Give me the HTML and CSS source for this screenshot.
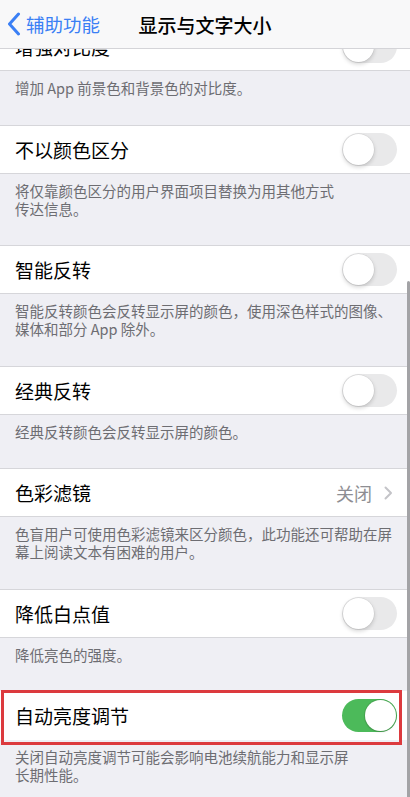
FILE: index.html
```html
<!DOCTYPE html>
<html lang="zh-CN">
<head>
  <meta charset="UTF-8" />
  <meta name="viewport" content="width=device-width, initial-scale=1.0"/>
  <title>显示与文字大小</title>
  <link rel="stylesheet" href="styles.css">
</head>
<body>

  <header class="navbar">
    <a class="back" href="#">
      <svg width="14" height="24" viewBox="0 0 14 24">
        <path d="M11.5 2 L2.5 12 L11.5 22" fill="none" stroke="currentColor" stroke-width="3" stroke-linecap="round" stroke-linejoin="round"/>
      </svg>
      <span>辅助功能</span>
    </a>
    <h1 class="title">显示与文字大小</h1>
  </header>

  <main class="settings">
    <section class="group">
      <div class="cell">
        <span class="label">增强对比度</span>
        <span class="switch"></span>
      </div>
      <p class="footer">增加 App 前景色和背景色的对比度。</p>
    </section>

    <section class="group">
      <div class="cell">
        <span class="label">不以颜色区分</span>
        <span class="switch"></span>
      </div>
      <p class="footer">将仅靠颜色区分的用户界面项目替换为用其他方式<br>传达信息。</p>
    </section>

    <section class="group">
      <div class="cell">
        <span class="label">智能反转</span>
        <span class="switch"></span>
      </div>
      <p class="footer">智能反转颜色会反转显示屏的颜色，使用深色样式的图像、<br>媒体和部分 App 除外。</p>
    </section>

    <section class="group">
      <div class="cell">
        <span class="label">经典反转</span>
        <span class="switch"></span>
      </div>
      <p class="footer">经典反转颜色会反转显示屏的颜色。</p>
    </section>

    <section class="group">
      <div class="cell">
        <span class="label">色彩滤镜</span>
        <span class="detail">关闭
          <svg width="9" height="14" viewBox="0 0 9 14">
            <path d="M1.5 1.5 L7 7 L1.5 12.5" fill="none" stroke="currentColor" stroke-width="2" stroke-linecap="round" stroke-linejoin="round"/>
          </svg>
        </span>
      </div>
      <p class="footer">色盲用户可使用色彩滤镜来区分颜色，此功能还可帮助在屏<br>幕上阅读文本有困难的用户。</p>
    </section>

    <section class="group">
      <div class="cell">
        <span class="label">降低白点值</span>
        <span class="switch"></span>
      </div>
      <p class="footer">降低亮色的强度。</p>
    </section>

    <section class="group">
      <div class="cell marked">
        <span class="label">自动亮度调节</span>
        <span class="switch on"></span>
      </div>
      <p class="footer">关闭自动亮度调节可能会影响电池续航能力和显示屏<br>长期性能。</p>
    </section>
  </main>

  <div class="scroll-indicator"></div>

</body>
</html>
```

FILE: styles.css
```css
body {
  margin: 0;
  background: #efeff4;
  font-family: "Noto Sans CJK SC", "Noto Sans", sans-serif;
  color: #000;
  overflow: hidden;
}

/* top bar stays over the scrolled list */
.navbar {
  position: fixed;
  top: 0;
  left: 0;
  right: 0;
  z-index: 2;
  height: 49px;
  display: flex;
  align-items: center;
  justify-content: center;
  background: #f8f8f9;
  border-bottom: 1px solid #d4d4d8;
  box-sizing: border-box;
}
.back {
  position: absolute;
  left: 7px;
  top: 12px;
  display: flex;
  align-items: center;
  gap: 5px;
  color: #3a7ff5;
  text-decoration: none;
  font-size: 18.5px;
}
.back span {
  line-height: 24px;
}
.title {
  margin: 0;
  font-size: 19px;
  font-weight: 500;
  letter-spacing: 0;
}

.settings {
  padding-top: 22px;
}
.group {
  margin: 0;
}
.cell {
  height: 49px;
  display: flex;
  align-items: center;
  justify-content: space-between;
  padding: 0 13px 0 15px;
  background: #fff;
  border-top: 1px solid #d6d6da;
  border-bottom: 1px solid #d6d6da;
  box-sizing: border-box;
}
.label {
  font-size: 19px;
}
.detail {
  display: flex;
  align-items: center;
  gap: 12px;
  color: #8e8e93;
  font-size: 18px;
  margin-right: 4px;
}
.detail svg {
  color: #c4c4c8;
}
.footer {
  margin: 0;
  padding: 8px 15px 27.5px;
  font-size: 14.5px;
  line-height: 18px;
  color: #6d6d72;
}

/* ios style switch */
.switch {
  position: relative;
  width: 55px;
  height: 33px;
  border-radius: 17px;
  background: #e9e9ea;
  box-sizing: border-box;
}
.switch::after {
  content: "";
  position: absolute;
  top: 1px;
  left: 1px;
  width: 31px;
  height: 31px;
  border-radius: 50%;
  background: #fff;
  box-shadow: 0 2px 4px rgba(0, 0, 0, 0.18), 0 0 0 0.5px rgba(0, 0, 0, 0.08);
}
.switch.on {
  background: #4cba5a;
}
.switch.on::after {
  left: 23px;
  box-shadow: 0 1px 2px rgba(0, 0, 0, 0.15), 0 0 0 1px rgba(60, 120, 60, 0.25);
}

/* red frame drawn round the highlighted row */
.marked {
  position: relative;
  border-color: transparent;
}
.marked::after {
  content: "";
  position: absolute;
  top: -2px;
  bottom: -6px;
  left: 1px;
  right: 8px;
  border: 3px solid #dc3a3e;
}

.scroll-indicator {
  position: fixed;
  right: 0;
  top: 281px;
  width: 3px;
  height: 540px;
  border-radius: 2px;
  background: #a3a3a6;
}
```
